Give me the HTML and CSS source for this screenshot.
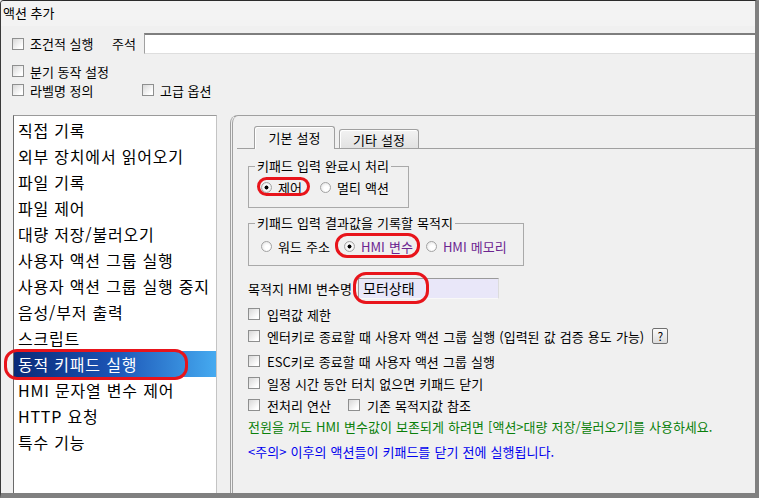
FILE: index.html
```html
<!DOCTYPE html>
<html lang="ko">
<head>
<meta charset="utf-8">
<title>액션 추가</title>
<link rel="stylesheet" href="styles.css">
</head>
<body>
<div class="window">
  <div class="titlebar">액션 추가</div>
  <div class="options">
    <div class="opt-row row1">
      <label class="chk-label w-cond"><span class="chk"></span>조건적 실행</label>
      <span class="memo-label">주석</span>
      <div class="memo-input"></div>
    </div>
    <div class="opt-row row2">
      <label class="chk-label"><span class="chk"></span>분기 동작 설정</label>
    </div>
    <div class="opt-row row3">
      <label class="chk-label w-label"><span class="chk"></span>라벨명 정의</label>
      <label class="chk-label"><span class="chk"></span>고급 옵션</label>
    </div>
  </div>
  <div class="main">
    <ul class="listbox">
      <li>직접 기록</li>
      <li>외부 장치에서 읽어오기</li>
      <li>파일 기록</li>
      <li>파일 제어</li>
      <li>대량 저장/불러오기</li>
      <li>사용자 액션 그룹 실행</li>
      <li>사용자 액션 그룹 실행 중지</li>
      <li>음성/부저 출력</li>
      <li>스크립트</li>
      <li class="sel">동적 키패드 실행</li>
      <li>HMI 문자열 변수 제어</li>
      <li>HTTP 요청</li>
      <li>특수 기능</li>
    </ul>
    <div class="panel">
      <div class="tabstrip">
        <div class="tab active">기본 설정</div>
        <div class="tab">기타 설정</div>
      </div>
      <div class="page">
        <fieldset class="group g1">
          <legend>키패드 입력 완료시 처리</legend>
          <div class="radio-row">
            <span class="ri hl-ctrl"><span class="radio on"></span>제어</span>
            <span class="ri"><span class="radio"></span>멀티 액션</span>
          </div>
        </fieldset>
        <fieldset class="group g2">
          <legend>키패드 입력 결과값을 기록할 목적지</legend>
          <div class="radio-row">
            <span class="ri r-word"><span class="radio"></span>워드 주소</span>
            <span class="ri r-var hl-var purple"><span class="radio on"></span>HMI 변수</span>
            <span class="ri purple"><span class="radio"></span>HMI 메모리</span>
          </div>
        </fieldset>
        <div class="var-row">
          <span class="var-label">목적지 HMI 변수명</span>
          <div class="var-input">모터상태</div>
        </div>
        <div class="cb-row first"><span class="chk"></span>입력값 제한</div>
        <div class="cb-row"><span class="chk"></span>엔터키로 종료할 때 사용자 액션 그룹 실행 (입력된 값 검증 용도 가능)<span class="help-btn">?</span></div>
        <div class="cb-row esc"><span class="chk"></span>ESC키로 종료할 때 사용자 액션 그룹 실행</div>
        <div class="cb-row"><span class="chk"></span>일정 시간 동안 터치 없으면 키패드 닫기</div>
        <div class="cb-row">
          <span class="cb-item w-pre"><span class="chk"></span>전처리 연산</span>
          <span class="cb-item"><span class="chk"></span>기존 목적지값 참조</span>
        </div>
        <div class="note">전원을 꺼도 HMI 변수값이 보존되게 하려면 [액션&gt;대량 저장/불러오기]를 사용하세요.</div>
        <div class="warn">&lt;주의&gt; 이후의 액션들이 키패드를 닫기 전에 실행됩니다.</div>
      </div>
    </div>
  </div>
</div>
</body>
</html>
```
FILE: styles.css
```css
* { box-sizing: border-box; }
html, body { margin: 0; padding: 0; }
body {
  width: 759px;
  height: 498px;
  overflow: hidden;
  background: #f0f0f0;
  font-family: "Noto Sans CJK KR", "Noto Sans", sans-serif;
  font-size: 13px;
  color: #000;
}
.window {
  width: 759px;
  height: 498px;
  display: flex;
  flex-direction: column;
  border-top: 1px solid #2b2b2b;
  border-left: 1px solid #3a3a3a;
  border-right: 4px solid #808080;
  border-bottom: 5px solid #808080;
  border-top-left-radius: 4px;
  background: #f0f0f0;
  overflow: hidden;
}
.titlebar {
  height: 25px;
  line-height: 24px;
  padding-left: 2px;
  background: #f3f3f3;
  flex: none;
}
.options { padding: 7px 0 0 11px; flex: none; }
.opt-row { display: flex; align-items: center; }
.row1 { height: 21px; }
.row2 { height: 18px; margin-top: 8px; }
.row3 { height: 18px; margin-top: 1px; }
.chk-label { display: flex; align-items: center; white-space: nowrap; }
.w-cond { width: 100px; }
.w-label { width: 130px; }
.chk {
  display: inline-block;
  flex: none;
  width: 12px;
  height: 12px;
  border: 1px solid #8e8f8f;
  background: linear-gradient(135deg, #d8d8d8, #ffffff 80%);
  margin-right: 6px;
}
.memo-label { width: 32px; }
.memo-input {
  flex: 1;
  height: 21px;
  background: #fff;
  border-top: 2px solid #7e7e7e;
  border-left: 1px solid #a0a0a0;
  border-bottom: 1px solid #dedede;
}
.main {
  flex: 1;
  display: flex;
  margin-top: 16px;
  padding-left: 12px;
  min-height: 0;
}
.listbox {
  list-style: none;
  margin: 0;
  padding: 1px 0 0;
  width: 204px;
  flex: none;
  background: #fff;
  border: 1px solid;
  border-color: #9a9a9a #c4c4c4 transparent #6a6a6a;
  border-bottom: none;
  font-size: 16px;
  letter-spacing: 0.8px;
}
.listbox li {
  height: 26px;
  line-height: 26px;
  padding-left: 4px;
  white-space: nowrap;
}
.listbox li.sel {
  position: relative;
  color: #fff;
  background: linear-gradient(90deg, #0b2a78 0%, #1c55b6 50%, #45aaf0 100%);
}
.listbox li.sel::after {
  content: "";
  position: absolute;
  left: -10px;
  top: -2px;
  width: 178px;
  height: 25px;
  border: 3px solid #e8141b;
  border-radius: 13px;
}
.panel {
  flex: 1;
  margin-left: 13px;
  border-top: 1px solid #a0a0a0;
  border-left: 3px double #a0a0a0;
  border-top-left-radius: 8px;
  display: flex;
  flex-direction: column;
  word-spacing: 0.5px;
}
.tabstrip {
  height: 33px;
  margin-left: 4px;
  padding-left: 17px;
  border-bottom: 1px solid #a0a0a0;
  display: flex;
  align-items: flex-end;
  gap: 4px;
  flex: none;
}
.tab {
  border: 1px solid #a0a0a0;
  border-bottom: none;
  border-radius: 3px 3px 0 0;
  text-align: center;
  box-shadow: inset 1px 1px 0 #fff;
}
.tab.active {
  width: 81px;
  height: 23px;
  line-height: 22px;
  margin-bottom: -1px;
  background: #f0f0f0;
  position: relative;
}
.tab:not(.active) {
  width: 80px;
  height: 19px;
  line-height: 20px;
  background: linear-gradient(#f2f2f2, #e2e2e2);
}
.page { padding-left: 15px; }
.group {
  margin: 0;
  padding: 0 12px;
  border: 1px solid #a9a9a9;
  min-width: 0;
}
.group legend {
  margin-left: -6px;
  padding: 0 2px;
  line-height: 16px;
  height: 16px;
}
.g1 { width: 161px; margin-top: 9px; padding-bottom: 10px; }
.g2 { width: 276px; margin-top: 7px; padding-bottom: 9px; }
.radio-row { height: 19px; display: flex; align-items: center; }
.g1 .radio-row { margin-top: 4px; }
.g2 .radio-row { margin-top: 6px; }
.ri { display: inline-flex; align-items: center; height: 19px; white-space: nowrap; position: relative; }
.hl-ctrl { margin-right: 18px; }
.r-word { margin-right: 14px; }
.r-var { margin-right: 13px; }
.radio {
  display: inline-block;
  flex: none;
  width: 11px;
  height: 11px;
  border-radius: 50%;
  border: 1px solid #a3a3a3;
  background: radial-gradient(circle at 60% 60%, #ffffff 30%, #dcdcdc 100%);
  margin-right: 6px;
}
.radio.on {
  background: radial-gradient(circle, #000 0 1.7px, #ffffff 2.3px, #f2f2f2 60%, #d8d8d8 100%);
}
.purple { color: #6c2590; }
.hl-ctrl::after {
  content: "";
  position: absolute;
  left: -4px;
  right: -8px;
  top: -1px;
  bottom: 1px;
  border: 3px solid #e8141b;
  border-radius: 10px;
}
.hl-var::after {
  content: "";
  position: absolute;
  left: -9px;
  right: -7px;
  top: -4px;
  bottom: -2px;
  border: 3px solid #e8141b;
  border-radius: 12px;
}
.var-row { margin-top: 12px; height: 21px; display: flex; align-items: center; }
.var-label { width: 110px; white-space: nowrap; }
.var-input {
  position: relative;
  width: 141px;
  height: 21px;
  background: #e9e7f9;
  border: 1px solid;
  border-color: #9a9a9a #dcdcdc #f8f8f8 #9a9a9a;
  font-size: 14px;
  line-height: 18px;
  padding-left: 4px;
  word-spacing: 0;
}
.var-input::after {
  content: "";
  position: absolute;
  left: -6px;
  top: -7px;
  width: 70px;
  height: 26px;
  border: 3px solid #e8141b;
  border-radius: 13px;
}
.cb-row { height: 22px; display: flex; align-items: center; white-space: nowrap; }
.cb-row .chk { margin-right: 7px; }
.cb-row.first { margin-top: 4px; }
.cb-row.esc { margin-top: 3px; }
.cb-item { display: inline-flex; align-items: center; }
.w-pre { width: 100px; }
.help-btn {
  display: inline-block;
  width: 16px;
  height: 16px;
  margin-left: 8px;
  border: 1px solid #707070;
  border-radius: 2px;
  background: linear-gradient(#fbfbfb, #dcdcdc);
  text-align: center;
  line-height: 14px;
  font-size: 12px;
}
.note { height: 22px; line-height: 22px; color: #0a800a; white-space: nowrap; }
.warn { height: 22px; line-height: 22px; margin-top: 3px; color: #0000ee; white-space: nowrap; }
```
